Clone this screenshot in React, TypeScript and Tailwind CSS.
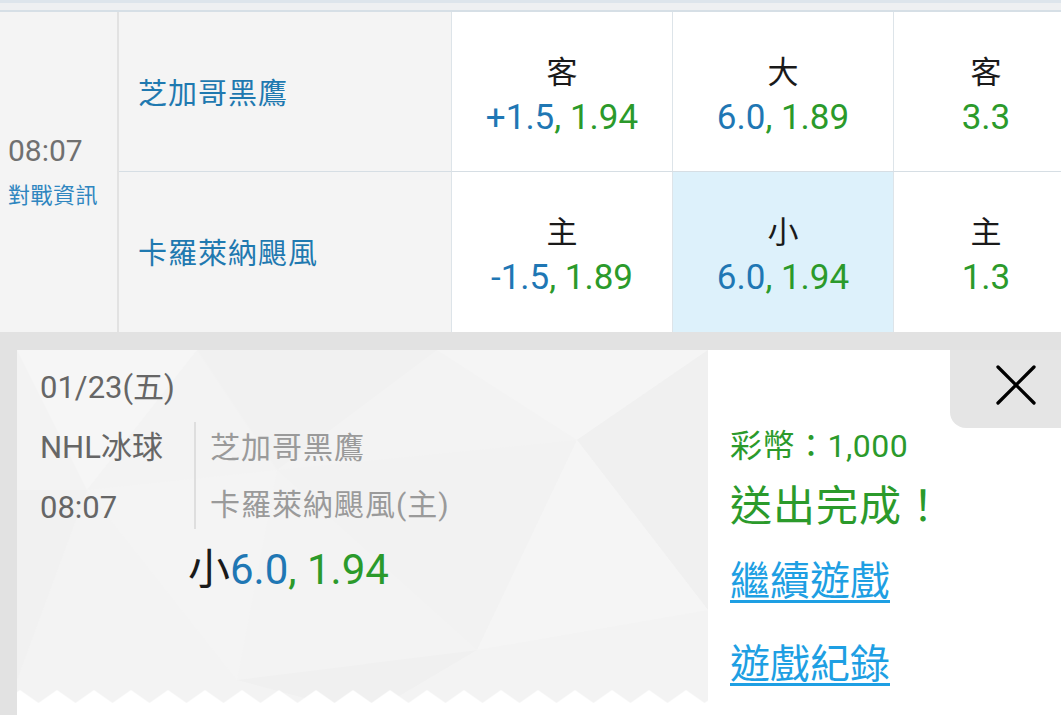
import { X } from 'lucide-react'

const rows = [
  {
    team: '芝加哥黑鷹',
    cells: [
      { label: '客', line: '+1.5', odds: '1.94' },
      { label: '大', line: '6.0', odds: '1.89' },
      { label: '客', line: '', odds: '3.3' },
    ],
  },
  {
    team: '卡羅萊納颶風',
    cells: [
      { label: '主', line: '-1.5', odds: '1.89' },
      { label: '小', line: '6.0', odds: '1.94', picked: true },
      { label: '主', line: '', odds: '1.3' },
    ],
  },
]

function OddsCell({ cell, last }: { cell: any; last: boolean }) {
  return (
    <div
      className={`flex flex-col items-center justify-center pt-[10px] gap-[6px] ${
        cell.picked ? 'bg-[#ddf1fb]' : 'bg-white'
      } ${last ? '' : 'border-r border-[#dde4e9]'}`}
    >
      <span className="text-[31px] leading-[36px] text-[#1a1a1a]">{cell.label}</span>
      <span className="text-[35px] leading-[42px]">
        {cell.line && (
          <>
            <span className="text-[#1f77b4]">{cell.line}</span>
            <span className="text-[#2b9a2b]">, </span>
          </>
        )}
        <span className="text-[#2b9a2b]">{cell.odds}</span>
      </span>
    </div>
  )
}

function TicketPattern() {
  // faint low-poly background drawn behind the slip
  return (
    <svg className="absolute inset-0 w-full h-full" viewBox="0 0 691 365" preserveAspectRatio="none">
      <rect width="691" height="365" fill="#f3f3f3" />
      <polygon points="0,0 180,0 70,140" fill="#f6f6f6" />
      <polygon points="180,0 420,0 260,120" fill="#f1f1f1" />
      <polygon points="420,0 691,0 560,90" fill="#f5f5f5" />
      <polygon points="560,90 691,0 691,260" fill="#f0f0f0" />
      <polygon points="0,140 70,140 0,330" fill="#f1f1f1" />
      <polygon points="70,140 260,120 220,330" fill="#f4f4f4" />
      <polygon points="260,120 560,90 460,300" fill="#f2f2f2" />
      <polygon points="460,300 560,90 691,260" fill="#f5f5f5" />
      <polygon points="220,330 460,300 350,365" fill="#f0f0f0" />
    </svg>
  )
}

function Zigzag() {
  return (
    <svg className="absolute left-0 bottom-0 w-full h-[26px]" viewBox="0 0 691 26" preserveAspectRatio="none">
      <defs>
        <pattern id="zz" width="37" height="26" patternUnits="userSpaceOnUse" patternTransform="translate(-15.5 0)">
          <path d="M0 14 L18.5 1 L37 14 L37 26 L0 26 Z" fill="#ffffff" />
        </pattern>
      </defs>
      <rect width="691" height="26" fill="url(#zz)" />
    </svg>
  )
}

export default function App() {
  return (
    <div className="w-[1061px] h-[715px] overflow-hidden bg-[#e5e5e5] font-[Roboto,'Noto_Sans_CJK_TC',sans-serif]">
      {/* top strip */}
      <div className="h-[12px] bg-[#eef0f2] border-t-[3px] border-b-[2px] border-t-[#dde5ec] border-b-[#d6dfe6]" />

      {/* match row */}
      <div className="grid grid-cols-[119px_333px_221px_221px_184px] grid-rows-[160px_160px] h-[320px]">
        <div className="row-span-2 flex flex-col justify-center gap-[12px] pl-[8px] bg-[#f4f4f4] border-r-2 border-[#e2e2e2]">
          <span className="text-[30px] leading-[36px] text-[#707070]">08:07</span>
          <span className="text-[22px] leading-[30px] text-[#2f86c0] tracking-[0.5px]">對戰資訊</span>
        </div>
        {rows.map((row, ri) => (
          <div key={row.team} className="contents">
            <div
              className={`flex items-center pl-[19px] pt-[4px] bg-[#f4f4f4] border-r border-[#dde4e9] ${
                ri === 0 ? 'border-b border-b-[#d6dee4]' : ''
              } col-start-2`}
            >
              <span className="text-[29px] leading-[36px] tracking-[1px] text-[#1f79b0]">{row.team}</span>
            </div>
            {row.cells.map((cell, ci) => (
              <div key={ci} className={`grid ${ri === 0 ? 'border-b border-[#d6dee4]' : ''}`}>
                <OddsCell cell={cell} last={ci === 2} />
              </div>
            ))}
          </div>
        ))}
      </div>

      {/* bet slip */}
      <div className="flex pl-[17px] pt-[18px] h-[383px] bg-[#e2e2e2]">
        <div className="flex flex-1 bg-white">
          <div className="relative w-[691px] h-full">
            <TicketPattern />
            <Zigzag />
            <div className="relative flex flex-col pl-[23px] pt-[18px]">
              <span className="text-[31px] leading-[40px] text-[#666666]">01/23(五)</span>
              <div className="flex items-start h-[108px] mt-[14px]">
                <div className="flex flex-col w-[154px] text-[31px] text-[#666666]">
                  <span className="leading-[52px]">NHL冰球</span>
                  <span className="leading-[68px]">08:07</span>
                </div>
                <div className="flex flex-col h-[107px] border-l-2 border-[#dedede] pl-[14px] text-[30px] text-[#9a9a9a] tracking-[1px]">
                  <span className="leading-[52px]">芝加哥黑鷹</span>
                  <span className="leading-[62px]">卡羅萊納颶風(主)</span>
                </div>
              </div>
              <div className="mt-[15px] pl-[148px] text-[42px] leading-[50px]">
                <span className="text-[#1a1a1a]">小</span>
                <span className="text-[#1f77b4]">6.0</span>
                <span className="text-[#2b9a2b]">, 1.94</span>
              </div>
            </div>
          </div>

          <div className="relative flex-1 flex flex-col pl-[22px] pt-[76px]">
            <div className="absolute top-0 right-0 w-[111px] h-[78px] bg-[#e5e5e5] rounded-bl-[16px] flex items-center justify-center pl-[20px] pb-[8px]">
              <X className="w-[72px] h-[72px] shrink-0 text-black" strokeWidth={1.1} />
            </div>
            <span className="text-[32px] leading-[40px] tracking-[0.5px] text-[#2b9a2b]">彩幣：1,000</span>
            <span className="mt-[15px] text-[42px] leading-[52px] tracking-[1px] text-[#2b9a2b]">送出完成！</span>
            <span className="mt-[24px] text-[40px] leading-[50px] text-[#1e9fe3] underline decoration-[3px] underline-offset-[5px]">
              繼續遊戲
            </span>
            <span className="mt-[33px] text-[40px] leading-[50px] text-[#1e9fe3] underline decoration-[3px] underline-offset-[5px]">
              遊戲紀錄
            </span>
          </div>
        </div>
      </div>
    </div>
  )
}
